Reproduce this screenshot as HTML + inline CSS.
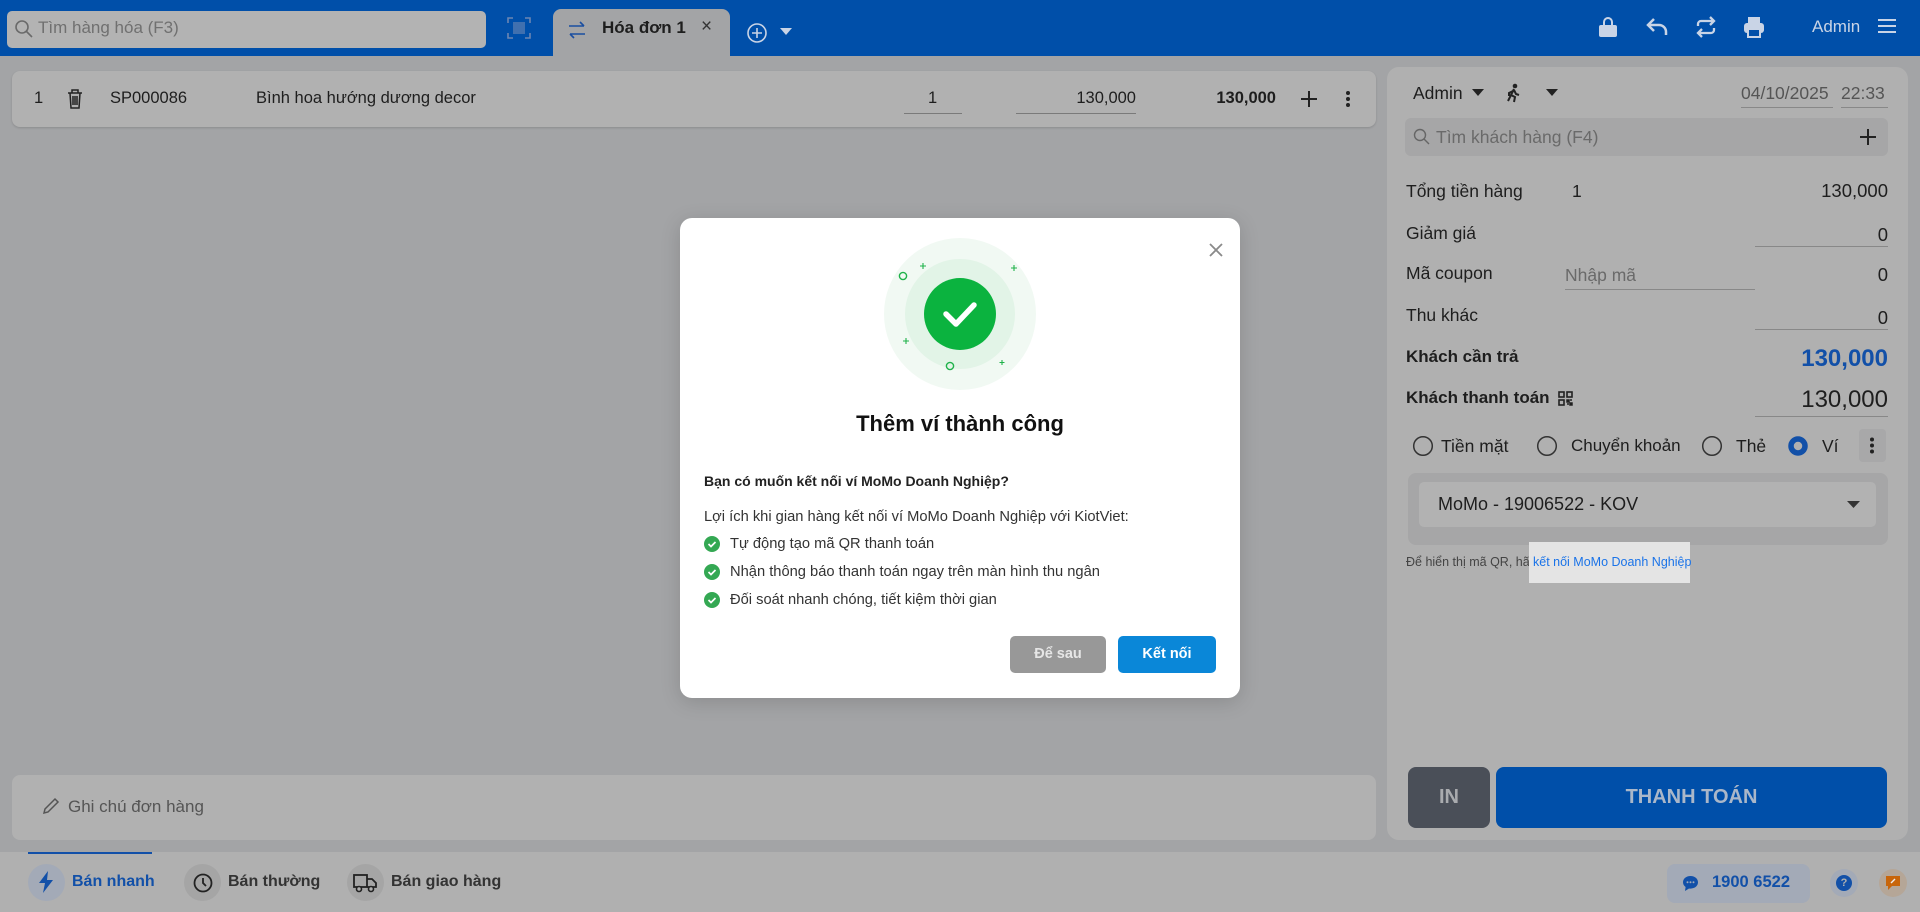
<!DOCTYPE html>
<html><head><meta charset="utf-8"><style>
*{box-sizing:border-box;margin:0;padding:0}
body{width:1920px;height:912px;overflow:hidden;background:#a3a4a6;font-family:"Liberation Sans","Noto Sans CJK SC",sans-serif;color:#1e1e1e;position:relative}
.a{position:absolute}
.t{position:absolute;white-space:nowrap}
.p{font-size:17.5px}
</style></head><body>
<div class="a" style="left:0;top:0;width:1920px;height:56px;background:#004fa9"></div>
<div class="a" style="left:7px;top:11px;width:479px;height:37px;background:#b3b3b3;border-radius:5px"></div>
<svg class="a" style="left:14px;top:19px" width="20" height="20" viewBox="0 0 20 20"><circle cx="8" cy="8" r="6" fill="none" stroke="#6a6a6a" stroke-width="1.6"/><path d="M12.5 12.5L18 18" stroke="#6a6a6a" stroke-width="1.6"/></svg>
<div class="t" style="left:38px;top:18px;font-size:17px;color:#707070">Tìm hàng hóa (F3)</div>
<svg class="a" style="left:507px;top:17px" width="24" height="22" viewBox="0 0 24 22"><path d="M1 6V1h5M18 1h5v5M23 16v5h-5M6 21H1v-5" fill="none" stroke="#6b86b3" stroke-width="1.6"/><path d="M7 5v12M9 5v12M11 5v12M13 5v12M15 5v12M17 5v12" stroke="#6b86b3" stroke-width="1.2"/></svg>
<div class="a" style="left:553px;top:9px;width:177px;height:47px;background:#a3a4a6;border-radius:8px 8px 0 0"></div>
<svg class="a" style="left:567px;top:20px" width="20" height="20" viewBox="0 0 20 20"><path d="M2 6h15M13 2l4 4M18 14H3M7 18l-4-4" fill="none" stroke="#1b4ea0" stroke-width="1.6"/></svg>
<div class="t" style="left:602px;top:18px;font-size:17px;font-weight:bold">Hóa đơn 1</div>
<div class="t" style="left:701px;top:16px;font-size:19px;color:#333">×</div>
<svg class="a" style="left:746px;top:22px" width="22" height="22" viewBox="0 0 22 22"><circle cx="11" cy="11" r="9" fill="none" stroke="#c9d4e6" stroke-width="1.6"/><path d="M11 6v10M6 11h10" stroke="#c9d4e6" stroke-width="1.6"/></svg>
<svg class="a" style="left:780px;top:28px" width="12" height="8"><path d="M0 0h12L6 7z" fill="#c9d4e6"/></svg>
<svg class="a" style="left:1598px;top:17px" width="20" height="20" viewBox="0 0 20 20"><rect x="1" y="8" width="18" height="12" rx="2" fill="#c9d4e6"/><path d="M6 9V5a4 4 0 0 1 8 0v4" fill="none" stroke="#c9d4e6" stroke-width="2"/></svg>
<svg class="a" style="left:1646px;top:17px" width="22" height="20" viewBox="0 0 22 20"><path d="M8 2L2 8l6 6" fill="none" stroke="#c9d4e6" stroke-width="2.5"/><path d="M2 8h11a7 7 0 0 1 7 7v3" fill="none" stroke="#c9d4e6" stroke-width="2.5"/></svg>
<svg class="a" style="left:1695px;top:16px" width="22" height="22" viewBox="0 0 22 22"><path d="M3 10V8a3 3 0 0 1 3-3h13M15 1l4 4-4 4M19 12v2a3 3 0 0 1-3 3H3M7 13l-4 4 4 4" fill="none" stroke="#c9d4e6" stroke-width="2.3"/></svg>
<svg class="a" style="left:1743px;top:16px" width="22" height="22" viewBox="0 0 22 22"><rect x="5" y="1" width="12" height="6" fill="#c9d4e6"/><rect x="1" y="7" width="20" height="10" rx="3" fill="#c9d4e6"/><rect x="5" y="13" width="12" height="8" fill="#004fa9" stroke="#c9d4e6" stroke-width="2"/></svg>
<div class="t" style="left:1812px;top:17px;font-size:17px;color:#c9d4e6">Admin</div>
<svg class="a" style="left:1878px;top:18px" width="18" height="16"><path d="M0 2h18M0 8h18M0 14h18" stroke="#c9d4e6" stroke-width="2"/></svg>

<div class="a" style="left:12px;top:71px;width:1364px;height:56px;background:#b1b1b1;border-radius:8px;box-shadow:0 1px 2px rgba(0,0,0,.15)"></div>
<div class="t" style="left:34px;top:89px;font-size:16.5px">1</div>
<svg class="a" style="left:67px;top:89px" width="16" height="20" viewBox="0 0 16 20"><path d="M1 4h14M5 4V1h6v3M3 4l1 15h8l1-15M6 7v9M8 7v9M10 7v9" fill="none" stroke="#222" stroke-width="1.5"/></svg>
<div class="t" style="left:110px;top:89px;font-size:16.5px">SP000086</div>
<div class="t" style="left:256px;top:89px;font-size:16.5px">Bình hoa hướng dương decor</div>
<div class="t" style="left:928px;top:89px;font-size:16.5px">1</div>
<div class="a" style="left:904px;top:113px;width:58px;height:1px;background:#7a7a7a"></div>
<div class="t" style="left:1016px;top:89px;width:120px;text-align:right;font-size:16.5px">130,000</div>
<div class="a" style="left:1016px;top:113px;width:120px;height:1px;background:#7a7a7a"></div>
<div class="t" style="left:1156px;top:89px;width:120px;text-align:right;font-size:16.5px;font-weight:bold">130,000</div>
<svg class="a" style="left:1301px;top:91px" width="16" height="16"><path d="M8 0v16M0 8h16" stroke="#222" stroke-width="2"/></svg>
<svg class="a" style="left:1345px;top:90px" width="6" height="18"><circle cx="3" cy="3" r="2" fill="#222"/><circle cx="3" cy="9" r="2" fill="#222"/><circle cx="3" cy="15" r="2" fill="#222"/></svg>

<div class="a" style="left:12px;top:775px;width:1364px;height:65px;background:#b1b1b1;border-radius:8px"></div>
<svg class="a" style="left:42px;top:797px" width="18" height="18" viewBox="0 0 18 18"><path d="M2 16l1-4L13 2l3 3L6 15z" fill="none" stroke="#555" stroke-width="1.5"/></svg>
<div class="t" style="left:68px;top:797px;font-size:17px;color:#555">Ghi chú đơn hàng</div>

<div class="a" style="left:1387px;top:67px;width:521px;height:773px;background:#b0b0b0;border-radius:12px"></div>
<div class="t p" style="left:1413px;top:83px">Admin</div>
<svg class="a" style="left:1472px;top:89px" width="12" height="7"><path d="M0 0h12L6 7z" fill="#222"/></svg>
<svg class="a" style="left:1506px;top:83px" width="16" height="20" viewBox="0 0 16 20"><circle cx="9" cy="3" r="2.3" fill="#222"/><path d="M8 6L5 12l4 2-1 5M8 7l2 4 3 1M5 12l-3 6M7 8L3 10v3" fill="none" stroke="#222" stroke-width="2"/></svg>
<svg class="a" style="left:1546px;top:89px" width="12" height="7"><path d="M0 0h12L6 7z" fill="#222"/></svg>
<div class="t p" style="left:1741px;top:83px;color:#555">04/10/2025</div>
<div class="a" style="left:1741px;top:107px;width:92px;height:1px;background:#888"></div>
<div class="t p" style="left:1841px;top:83px;color:#555">22:33</div>
<div class="a" style="left:1841px;top:107px;width:47px;height:1px;background:#888"></div>
<div class="a" style="left:1405px;top:118px;width:483px;height:38px;background:#a6a6a7;border-radius:6px"></div>
<svg class="a" style="left:1413px;top:128px" width="17" height="17" viewBox="0 0 17 17"><circle cx="7" cy="7" r="5.5" fill="none" stroke="#666" stroke-width="1.4"/><path d="M11 11l5 5" stroke="#666" stroke-width="1.4"/></svg>
<div class="t p" style="left:1436px;top:127px;color:#6a6a6a">Tìm khách hàng (F4)</div>
<svg class="a" style="left:1860px;top:129px" width="16" height="16"><path d="M8 0v16M0 8h16" stroke="#222" stroke-width="2"/></svg>

<div class="t p" style="left:1406px;top:181px">Tổng tiền hàng</div>
<div class="t p" style="left:1572px;top:181px">1</div>
<div class="t" style="left:1700px;top:180px;width:188px;text-align:right;font-size:18.5px">130,000</div>
<div class="t p" style="left:1406px;top:223px">Giảm giá</div>
<div class="t" style="left:1700px;top:224px;width:188px;text-align:right;font-size:18.5px">0</div>
<div class="a" style="left:1755px;top:246px;width:133px;height:1px;background:#888"></div>
<div class="t p" style="left:1406px;top:263px">Mã coupon</div>
<div class="t p" style="left:1565px;top:265px;color:#6a6a6a">Nhập mã</div>
<div class="a" style="left:1565px;top:289px;width:190px;height:1px;background:#888"></div>
<div class="t" style="left:1700px;top:264px;width:188px;text-align:right;font-size:18.5px">0</div>
<div class="t p" style="left:1406px;top:305px">Thu khác</div>
<div class="t" style="left:1700px;top:307px;width:188px;text-align:right;font-size:18.5px">0</div>
<div class="a" style="left:1755px;top:329px;width:133px;height:1px;background:#888"></div>
<div class="t" style="left:1406px;top:347px;font-size:17px;font-weight:bold">Khách cần trả</div>
<div class="t" style="left:1680px;top:345px;width:208px;text-align:right;font-size:24px;font-weight:bold;color:#1250a8">130,000</div>
<div class="t" style="left:1406px;top:388px;font-size:17px;font-weight:bold">Khách thanh toán</div>
<svg class="a" style="left:1558px;top:391px" width="15" height="15" viewBox="0 0 15 15"><rect x="1" y="1" width="5" height="5" fill="none" stroke="#222" stroke-width="1.6"/><rect x="9" y="1" width="5" height="5" fill="none" stroke="#222" stroke-width="1.6"/><rect x="1" y="9" width="5" height="5" fill="none" stroke="#222" stroke-width="1.6"/><path d="M9 9h2v2H9zM12 12h2v2h-2zM12 9h2M9 13h2" stroke="#222" stroke-width="1.5"/></svg>
<div class="t" style="left:1680px;top:386px;width:208px;text-align:right;font-size:24px">130,000</div>
<div class="a" style="left:1755px;top:416px;width:133px;height:1px;background:#888"></div>

<svg class="a" style="left:1412px;top:435px" width="22" height="22"><circle cx="11" cy="11" r="9.3" fill="none" stroke="#333" stroke-width="1.5"/></svg>
<div class="t p" style="left:1441px;top:436px">Tiền mặt</div>
<svg class="a" style="left:1536px;top:435px" width="22" height="22"><circle cx="11" cy="11" r="9.3" fill="none" stroke="#333" stroke-width="1.5"/></svg>
<div class="t" style="left:1571px;top:436px;font-size:17px">Chuyển khoản</div>
<svg class="a" style="left:1701px;top:435px" width="22" height="22"><circle cx="11" cy="11" r="9.3" fill="none" stroke="#333" stroke-width="1.5"/></svg>
<div class="t p" style="left:1736px;top:436px">Thẻ</div>
<svg class="a" style="left:1787px;top:435px" width="22" height="22"><circle cx="11" cy="11" r="7" fill="none" stroke="#1250a8" stroke-width="5.5"/></svg>
<div class="t p" style="left:1822px;top:436px">Ví</div>
<div class="a" style="left:1859px;top:429px;width:27px;height:33px;background:#a8a8a9;border-radius:4px"></div>
<svg class="a" style="left:1869px;top:437px" width="6" height="17"><circle cx="3" cy="2.5" r="2" fill="#222"/><circle cx="3" cy="8.5" r="2" fill="#222"/><circle cx="3" cy="14.5" r="2" fill="#222"/></svg>

<div class="a" style="left:1408px;top:473px;width:480px;height:72px;background:#a6a6a7;border-radius:8px"></div>
<div class="a" style="left:1419px;top:482px;width:457px;height:45px;background:#b2b2b2;border-radius:5px"></div>
<div class="t" style="left:1438px;top:494px;font-size:18px">MoMo - 19006522 - KOV</div>
<svg class="a" style="left:1847px;top:501px" width="13" height="7"><path d="M0 0h13L6.5 7z" fill="#333"/></svg>
<div class="t" style="left:1406px;top:555px;font-size:12.5px;color:#444">Để hiển thị mã QR, hãy</div>
<div class="a" style="left:1529px;top:542px;width:161px;height:41px;background:#e4e4e4"></div>
<div class="t" style="left:1533px;top:555px;font-size:12.5px;color:#1a73e8">kết nối MoMo Doanh Nghiệp</div>

<div class="a" style="left:1408px;top:767px;width:82px;height:61px;background:#4a4f58;border-radius:8px"></div>
<div class="t" style="left:1408px;top:786px;width:82px;text-align:center;font-size:20px;font-weight:bold;color:#a9abae">IN</div>
<div class="a" style="left:1496px;top:767px;width:391px;height:61px;background:#004fa9;border-radius:8px"></div>
<div class="t" style="left:1496px;top:786px;width:391px;text-align:center;font-size:20px;font-weight:bold;color:#aab7c9">THANH TOÁN</div>

<div class="a" style="left:0;top:852px;width:1920px;height:60px;background:#b0b0b0"></div>
<div class="a" style="left:28px;top:852px;width:124px;height:2px;background:#1250a8"></div>
<div class="a" style="left:28px;top:864px;width:37px;height:37px;border-radius:50%;background:#a3aab7"></div>
<svg class="a" style="left:38px;top:871px" width="16" height="22" viewBox="0 0 16 22"><path d="M10 0L1 12h6l-2 10 10-13H9z" fill="#1250a8"/></svg>
<div class="t" style="left:72px;top:873px;font-size:16px;font-weight:bold;color:#1250a8">Bán nhanh</div>
<div class="a" style="left:184px;top:864px;width:37px;height:37px;border-radius:50%;background:#a5a5a5"></div>
<svg class="a" style="left:193px;top:873px" width="20" height="20" viewBox="0 0 20 20"><circle cx="10" cy="10" r="8.5" fill="none" stroke="#222" stroke-width="1.8"/><path d="M10 5v5l3 3" fill="none" stroke="#222" stroke-width="1.8"/></svg>
<div class="t" style="left:228px;top:873px;font-size:16px;font-weight:bold;color:#333">Bán thường</div>
<div class="a" style="left:347px;top:864px;width:37px;height:37px;border-radius:50%;background:#a5a5a5"></div>
<svg class="a" style="left:353px;top:873px" width="24" height="20" viewBox="0 0 24 20"><rect x="1" y="2" width="13" height="12" fill="none" stroke="#222" stroke-width="1.8"/><path d="M14 6h5l4 4v4h-9" fill="none" stroke="#222" stroke-width="1.8"/><circle cx="6" cy="16" r="2.5" fill="#b0b0b0" stroke="#222" stroke-width="1.6"/><circle cx="18" cy="16" r="2.5" fill="#b0b0b0" stroke="#222" stroke-width="1.6"/></svg>
<div class="t" style="left:391px;top:873px;font-size:16px;font-weight:bold;color:#333">Bán giao hàng</div>
<div class="a" style="left:1667px;top:864px;width:143px;height:39px;background:#a3aab7;border-radius:8px"></div>
<svg class="a" style="left:1682px;top:875px" width="17" height="17" viewBox="0 0 17 17"><path d="M8.5 1C4 1 1 3.8 1 7.3c0 2 1 3.6 2.6 4.7L3 16l4-2.5c.5.1 1 .1 1.5.1 4.5 0 7.5-2.8 7.5-6.3S13 1 8.5 1z" fill="#1250a8"/><circle cx="5.5" cy="7.3" r="1" fill="#a3aab7"/><circle cx="8.5" cy="7.3" r="1" fill="#a3aab7"/><circle cx="11.5" cy="7.3" r="1" fill="#a3aab7"/></svg>
<div class="t" style="left:1712px;top:873px;font-size:16.5px;font-weight:bold;color:#1250a8">1900 6522</div>
<div class="a" style="left:1830px;top:869px;width:28px;height:28px;border-radius:50%;background:#a3aab7"></div>
<div class="a" style="left:1836px;top:875px;width:16px;height:16px;border-radius:50%;background:#1250a8;color:#b0b0b0;font-size:11px;font-weight:bold;text-align:center;line-height:16px">?</div>
<div class="a" style="left:1879px;top:869px;width:28px;height:28px;border-radius:50%;background:#b5a697"></div>
<svg class="a" style="left:1885px;top:875px" width="16" height="16" viewBox="0 0 16 16"><path d="M1 1h14v10H7l-4 4v-4H1z" fill="#c8650a"/><path d="M6 8l4-4" stroke="#eee" stroke-width="1.4"/></svg>

<div class="a" style="left:680px;top:218px;width:560px;height:480px;background:#fff;border-radius:12px;box-shadow:0 4px 20px rgba(0,0,0,.15)"></div>
<svg class="a" style="left:1208px;top:242px" width="16" height="16"><path d="M2 2l12 12M14 2L2 14" stroke="#8a8a8a" stroke-width="1.8"/></svg>
<svg class="a" style="left:884px;top:238px" width="152" height="152" viewBox="0 0 152 152">
<circle cx="76" cy="76" r="76" fill="#f1f9f3"/><circle cx="76" cy="76" r="55" fill="#e2f4e7"/><circle cx="76" cy="76" r="36" fill="#0bb33f"/>
<path d="M62 76l10 10 18-19" fill="none" stroke="#fff" stroke-width="5.5" stroke-linecap="round" stroke-linejoin="round"/>
<circle cx="19" cy="38" r="3.6" fill="none" stroke="#1fb24a" stroke-width="1.4"/><circle cx="66" cy="128" r="3.6" fill="none" stroke="#1fb24a" stroke-width="1.4"/>
<path d="M39 25v6M36 28h6M130 27v6M127 30h6M22 100v6M19 103h6M118 122v5M115.5 124.5h5" stroke="#1fb24a" stroke-width="1.1"/></svg>
<div class="t" style="left:680px;top:411px;width:560px;text-align:center;font-size:22px;font-weight:bold;color:#111">Thêm ví thành công</div>
<div class="t" style="left:704px;top:473px;font-size:14px;font-weight:bold;color:#222">Bạn có muốn kết nối ví MoMo Doanh Nghiệp?</div>
<div class="t" style="left:704px;top:509px;font-size:14.7px;color:#333">Lợi ích khi gian hàng kết nối ví MoMo Doanh Nghiệp với KiotViet:</div>
<svg class="a" style="left:704px;top:536px" width="16" height="16"><circle cx="8" cy="8" r="8" fill="#34a853"/><path d="M4.5 8l2.5 2.5 4.5-4.5" fill="none" stroke="#fff" stroke-width="1.7"/></svg>
<div class="t" style="left:730px;top:536px;font-size:14.7px;color:#333">Tự động tạo mã QR thanh toán</div>
<svg class="a" style="left:704px;top:564px" width="16" height="16"><circle cx="8" cy="8" r="8" fill="#34a853"/><path d="M4.5 8l2.5 2.5 4.5-4.5" fill="none" stroke="#fff" stroke-width="1.7"/></svg>
<div class="t" style="left:730px;top:564px;font-size:14.7px;color:#333">Nhận thông báo thanh toán ngay trên màn hình thu ngân</div>
<svg class="a" style="left:704px;top:592px" width="16" height="16"><circle cx="8" cy="8" r="8" fill="#34a853"/><path d="M4.5 8l2.5 2.5 4.5-4.5" fill="none" stroke="#fff" stroke-width="1.7"/></svg>
<div class="t" style="left:730px;top:592px;font-size:14.7px;color:#333">Đối soát nhanh chóng, tiết kiệm thời gian</div>
<div class="a" style="left:1010px;top:636px;width:96px;height:37px;background:#989898;border-radius:5px;color:#e6e6e6;font-size:14.5px;font-weight:bold;text-align:center;line-height:37px">Để sau</div>
<div class="a" style="left:1118px;top:636px;width:98px;height:37px;background:#0a87d8;border-radius:5px;color:#fff;font-size:14.5px;font-weight:bold;text-align:center;line-height:37px">Kết nối</div>
</body></html>
